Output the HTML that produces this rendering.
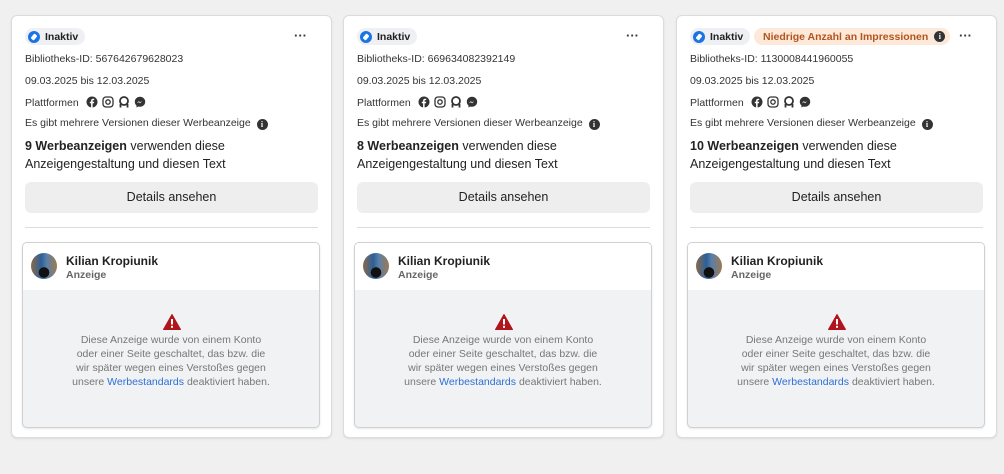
<!DOCTYPE html>
<html><head><meta charset="utf-8"><style>
*{box-sizing:border-box;margin:0;padding:0}
body{width:1004px;height:474px;background:#f0f0f0;font-family:"Liberation Sans",Arial,sans-serif;color:#1c1e21;position:relative;overflow:hidden}
.card{position:absolute;top:15px;width:321px;height:423px;background:#fff;border:1px solid #dcdcdc;border-radius:6px;box-shadow:0 1px 2px rgba(0,0,0,.08)}
.a{position:absolute;left:13px;font-size:10.5px;color:#333;white-space:nowrap}
.badge{position:absolute;left:13px;top:12px;height:17px;background:#eef0f3;border-radius:9px;padding:0 7px 0 3px;font-size:10.5px;font-weight:bold;display:flex;align-items:center;gap:5px;color:#222}
.chk{width:12px;height:12px;border-radius:50%;background:#1b74e4;display:inline-block;position:relative}
.chk:after{content:"";position:absolute;left:4px;top:3px;width:4px;height:6px;background:#fff;transform:rotate(40deg);border-radius:1px}
.warnb{position:absolute;top:12px;left:77px;height:17px;background:#fde9d9;border-radius:9px;padding:0 5px 0 9px;font-size:10.5px;font-weight:bold;color:#b3541e;display:flex;align-items:center;gap:6px}
.dots{position:absolute;right:24px;top:12px;font-size:13px;font-weight:bold;color:#333}
.info{display:inline-block;width:11px;height:11px;border-radius:50%;background:#333;color:#fff;font-size:8px;font-weight:bold;text-align:center;line-height:11px;font-family:"Liberation Serif",serif;vertical-align:-1px}
.ic{display:inline-block;width:12px;height:12px;vertical-align:-2px;margin-left:4px}
.big{position:absolute;left:13px;top:121px;font-size:12.5px;line-height:18px;color:#222}
.btn{position:absolute;left:13px;top:166px;width:293px;height:31px;background:#eeeeee;border-radius:6px;font-size:12.5px;text-align:center;line-height:31px;color:#222}
.hr{position:absolute;left:13px;top:211px;width:293px;height:1px;background:#ddd}
.ad{position:absolute;left:10px;top:226px;width:298px;height:186px;border:1px solid #d0d0d0;border-radius:5px;overflow:hidden;background:#f1f2f3;box-shadow:0 1px 2px rgba(0,0,0,.1)}
.adh{height:47px;background:#fff;position:relative}
.av{position:absolute;left:8px;top:10px;width:26px;height:26px;border-radius:50%;background:radial-gradient(circle at 50% 75%,#111 22%,transparent 23%),linear-gradient(90deg,#8a6a4a,#2b5f9a 40%,#5a7fa8 60%,#9c7a52);}
.nm{position:absolute;left:43px;top:11px;font-size:12px;font-weight:bold;color:#222}
.sub{position:absolute;left:43px;top:26px;font-size:10.5px;color:#666;font-weight:bold}
.tri{position:absolute;left:140px;top:71px}
.msg{position:absolute;left:0;width:100%;top:90px;text-align:center;font-size:10.5px;line-height:14px;color:#777}
.msg a{color:#2d6fd8;text-decoration:none}
</style></head><body>

<div class="card" style="left:11px">
<div class="badge"><span class="chk"></span>Inaktiv</div>
<div class="dots">···</div>
<div class="a" style="top:37px">Bibliotheks-ID: 567642679628023</div>
<div class="a" style="top:59px">09.03.2025 bis 12.03.2025</div>
<div class="a" style="top:80px">Plattformen <svg class="ic" viewBox="0 0 12 12"><circle cx="6" cy="6" r="5.5" fill="#333"/><path d="M6.6 12V7.2h1.4l.2-1.5H6.6v-.9c0-.4.2-.7.7-.7h.9V2.8H7C5.8 2.8 5.1 3.5 5.1 4.7v1H3.8v1.5h1.3V12z" fill="#fff"/></svg><svg class="ic" viewBox="0 0 12 12"><rect x="1" y="1" width="10" height="10" rx="3" fill="none" stroke="#333" stroke-width="1.3"/><circle cx="6" cy="6" r="2.2" fill="none" stroke="#333" stroke-width="1.3"/></svg><svg class="ic" viewBox="0 0 12 12"><circle cx="6" cy="5" r="4" fill="none" stroke="#333" stroke-width="1.8"/><path d="M2.5 8v3.5M9.5 8v3.5" stroke="#333" stroke-width="1.8"/></svg><svg class="ic" viewBox="0 0 12 12"><path d="M6 .8C3 .8.8 3 .8 5.8c0 1.5.6 2.8 1.7 3.7V11.5l1.8-1c.5.2 1.1.3 1.7.3 3 0 5.2-2.2 5.2-5S9 .8 6 .8z" fill="#333"/><path d="M2.8 7.2l2-2.1 1.2 1.1 2.1-1.1-2 2.1-1.2-1.1z" fill="#fff"/></svg></div>
<div class="a" style="top:101px">Es gibt mehrere Versionen dieser Werbeanzeige &nbsp;<span class="info">i</span></div>
<div class="big"><b>9 Werbeanzeigen</b> verwenden diese<br>Anzeigengestaltung und diesen Text</div>
<div class="btn">Details ansehen</div>
<div class="hr"></div>
<div class="ad"><div class="adh"><div class="av"></div><div class="nm">Kilian Kropiunik</div><div class="sub">Anzeige</div></div>
<svg class="tri" width="18" height="16" viewBox="0 0 18 16"><path d="M9 0.5L17.5 15.5H.5z" fill="#b0141c" stroke="#b0141c" stroke-linejoin="round"/><rect x="8" y="5" width="2" height="5.5" fill="#fff"/><rect x="8" y="11.8" width="2" height="2" fill="#fff"/></svg>
<div class="msg">Diese Anzeige wurde von einem Konto<br>oder einer Seite geschaltet, das bzw. die<br>wir später wegen eines Verstoßes gegen<br>unsere <a>Werbestandards</a> deaktiviert haben.</div></div>
</div>

<div class="card" style="left:343px">
<div class="badge"><span class="chk"></span>Inaktiv</div>
<div class="dots">···</div>
<div class="a" style="top:37px">Bibliotheks-ID: 669634082392149</div>
<div class="a" style="top:59px">09.03.2025 bis 12.03.2025</div>
<div class="a" style="top:80px">Plattformen <svg class="ic" viewBox="0 0 12 12"><circle cx="6" cy="6" r="5.5" fill="#333"/><path d="M6.6 12V7.2h1.4l.2-1.5H6.6v-.9c0-.4.2-.7.7-.7h.9V2.8H7C5.8 2.8 5.1 3.5 5.1 4.7v1H3.8v1.5h1.3V12z" fill="#fff"/></svg><svg class="ic" viewBox="0 0 12 12"><rect x="1" y="1" width="10" height="10" rx="3" fill="none" stroke="#333" stroke-width="1.3"/><circle cx="6" cy="6" r="2.2" fill="none" stroke="#333" stroke-width="1.3"/></svg><svg class="ic" viewBox="0 0 12 12"><circle cx="6" cy="5" r="4" fill="none" stroke="#333" stroke-width="1.8"/><path d="M2.5 8v3.5M9.5 8v3.5" stroke="#333" stroke-width="1.8"/></svg><svg class="ic" viewBox="0 0 12 12"><path d="M6 .8C3 .8.8 3 .8 5.8c0 1.5.6 2.8 1.7 3.7V11.5l1.8-1c.5.2 1.1.3 1.7.3 3 0 5.2-2.2 5.2-5S9 .8 6 .8z" fill="#333"/><path d="M2.8 7.2l2-2.1 1.2 1.1 2.1-1.1-2 2.1-1.2-1.1z" fill="#fff"/></svg></div>
<div class="a" style="top:101px">Es gibt mehrere Versionen dieser Werbeanzeige &nbsp;<span class="info">i</span></div>
<div class="big"><b>8 Werbeanzeigen</b> verwenden diese<br>Anzeigengestaltung und diesen Text</div>
<div class="btn">Details ansehen</div>
<div class="hr"></div>
<div class="ad"><div class="adh"><div class="av"></div><div class="nm">Kilian Kropiunik</div><div class="sub">Anzeige</div></div>
<svg class="tri" width="18" height="16" viewBox="0 0 18 16"><path d="M9 0.5L17.5 15.5H.5z" fill="#b0141c" stroke="#b0141c" stroke-linejoin="round"/><rect x="8" y="5" width="2" height="5.5" fill="#fff"/><rect x="8" y="11.8" width="2" height="2" fill="#fff"/></svg>
<div class="msg">Diese Anzeige wurde von einem Konto<br>oder einer Seite geschaltet, das bzw. die<br>wir später wegen eines Verstoßes gegen<br>unsere <a>Werbestandards</a> deaktiviert haben.</div></div>
</div>

<div class="card" style="left:676px">
<div class="badge"><span class="chk"></span>Inaktiv</div>
<div class="warnb">Niedrige Anzahl an Impressionen <span class="info">i</span></div>
<div class="dots">···</div>
<div class="a" style="top:37px">Bibliotheks-ID: 1130008441960055</div>
<div class="a" style="top:59px">09.03.2025 bis 12.03.2025</div>
<div class="a" style="top:80px">Plattformen <svg class="ic" viewBox="0 0 12 12"><circle cx="6" cy="6" r="5.5" fill="#333"/><path d="M6.6 12V7.2h1.4l.2-1.5H6.6v-.9c0-.4.2-.7.7-.7h.9V2.8H7C5.8 2.8 5.1 3.5 5.1 4.7v1H3.8v1.5h1.3V12z" fill="#fff"/></svg><svg class="ic" viewBox="0 0 12 12"><rect x="1" y="1" width="10" height="10" rx="3" fill="none" stroke="#333" stroke-width="1.3"/><circle cx="6" cy="6" r="2.2" fill="none" stroke="#333" stroke-width="1.3"/></svg><svg class="ic" viewBox="0 0 12 12"><circle cx="6" cy="5" r="4" fill="none" stroke="#333" stroke-width="1.8"/><path d="M2.5 8v3.5M9.5 8v3.5" stroke="#333" stroke-width="1.8"/></svg><svg class="ic" viewBox="0 0 12 12"><path d="M6 .8C3 .8.8 3 .8 5.8c0 1.5.6 2.8 1.7 3.7V11.5l1.8-1c.5.2 1.1.3 1.7.3 3 0 5.2-2.2 5.2-5S9 .8 6 .8z" fill="#333"/><path d="M2.8 7.2l2-2.1 1.2 1.1 2.1-1.1-2 2.1-1.2-1.1z" fill="#fff"/></svg></div>
<div class="a" style="top:101px">Es gibt mehrere Versionen dieser Werbeanzeige &nbsp;<span class="info">i</span></div>
<div class="big"><b>10 Werbeanzeigen</b> verwenden diese<br>Anzeigengestaltung und diesen Text</div>
<div class="btn">Details ansehen</div>
<div class="hr"></div>
<div class="ad"><div class="adh"><div class="av"></div><div class="nm">Kilian Kropiunik</div><div class="sub">Anzeige</div></div>
<svg class="tri" width="18" height="16" viewBox="0 0 18 16"><path d="M9 0.5L17.5 15.5H.5z" fill="#b0141c" stroke="#b0141c" stroke-linejoin="round"/><rect x="8" y="5" width="2" height="5.5" fill="#fff"/><rect x="8" y="11.8" width="2" height="2" fill="#fff"/></svg>
<div class="msg">Diese Anzeige wurde von einem Konto<br>oder einer Seite geschaltet, das bzw. die<br>wir später wegen eines Verstoßes gegen<br>unsere <a>Werbestandards</a> deaktiviert haben.</div></div>
</div>

</body></html>
